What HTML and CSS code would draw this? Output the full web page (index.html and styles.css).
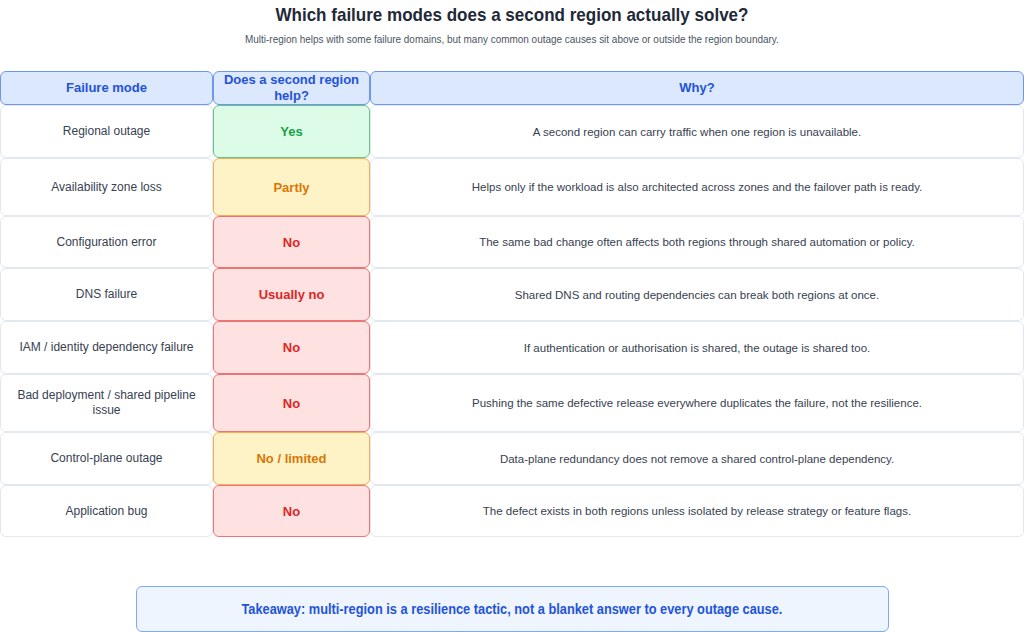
FILE: index.html
```html
<!DOCTYPE html>
<html>
<head>
<meta charset="utf-8">
<link rel="stylesheet" href="styles.css">
</head>
<body>
<div class="page">
  <h1 class="title">Which failure modes does a second region actually solve?</h1>
  <p class="subtitle">Multi-region helps with some failure domains, but many common outage causes sit above or outside the region boundary.</p>
  <div class="table">
    <div class="cell head">Failure mode</div>
    <div class="cell head">Does a second region help?</div>
    <div class="cell head">Why?</div>

    <div class="cell mode">Regional outage</div>
    <div class="cell verdict yes">Yes</div>
    <div class="cell why">A second region can carry traffic when one region is unavailable.</div>

    <div class="cell mode">Availability zone loss</div>
    <div class="cell verdict partly">Partly</div>
    <div class="cell why">Helps only if the workload is also architected across zones and the failover path is ready.</div>

    <div class="cell mode">Configuration error</div>
    <div class="cell verdict no">No</div>
    <div class="cell why">The same bad change often affects both regions through shared automation or policy.</div>

    <div class="cell mode">DNS failure</div>
    <div class="cell verdict no">Usually no</div>
    <div class="cell why">Shared DNS and routing dependencies can break both regions at once.</div>

    <div class="cell mode">IAM / identity dependency failure</div>
    <div class="cell verdict no">No</div>
    <div class="cell why">If authentication or authorisation is shared, the outage is shared too.</div>

    <div class="cell mode">Bad deployment / shared pipeline issue</div>
    <div class="cell verdict no">No</div>
    <div class="cell why">Pushing the same defective release everywhere duplicates the failure, not the resilience.</div>

    <div class="cell mode">Control-plane outage</div>
    <div class="cell verdict partly">No / limited</div>
    <div class="cell why">Data-plane redundancy does not remove a shared control-plane dependency.</div>

    <div class="cell mode">Application bug</div>
    <div class="cell verdict no">No</div>
    <div class="cell why">The defect exists in both regions unless isolated by release strategy or feature flags.</div>
  </div>
  <div class="takeaway"><span class="takeaway-text">Takeaway: multi-region is a resilience tactic, not a blanket answer to every outage cause.</span></div>
</div>
</body>
</html>
```

FILE: styles.css
```css
* { box-sizing: border-box; }
html, body {
  margin: 0;
  padding: 0;
  background: #ffffff;
  font-family: "Liberation Sans", Arial, sans-serif;
}
.page {
  width: 1024px;
  height: 632px;
  display: flex;
  flex-direction: column;
  align-items: center;
  overflow: hidden;
}
.title {
  margin: 4px 0 0;
  font-size: 19px;
  line-height: 22px;
  font-weight: bold;
  color: #1f2937;
  white-space: nowrap;
  transform: scaleX(0.896);
}
.subtitle {
  margin: 7px 0 0;
  font-size: 11px;
  line-height: 13px;
  color: #4b5563;
  white-space: nowrap;
  transform: scaleX(0.905);
}
.table {
  margin-top: 25px;
  width: 1024px;
  display: grid;
  grid-template-columns: 213px 157px 654px;
  grid-template-rows: 34px 53px 58px 52px 53px 53px 58px 53px 52px;
}
.cell {
  display: flex;
  align-items: center;
  justify-content: center;
  text-align: center;
  border: 1px solid #e2e8f0;
  border-radius: 6px;
  background: #ffffff;
  padding: 0 8px;
}
.head {
  background: #dbe8fd;
  border-color: #6d97ea;
  color: #2453d8;
  font-weight: bold;
  font-size: 13px;
  line-height: 16px;
}
.mode {
  font-size: 12px;
  line-height: 15px;
  color: #374151;
  padding: 0 12px;
}
.why {
  font-size: 11.5px;
  line-height: 14px;
  color: #374151;
}
.verdict {
  font-weight: bold;
  font-size: 13px;
}
.yes {
  background: #dcfce7;
  border-color: #6cc08a;
  color: #16a34a;
}
.partly {
  background: #fef3c7;
  border-color: #f0b05c;
  color: #d97706;
}
.no {
  background: #fee2e2;
  border-color: #ec7474;
  color: #dc2626;
}
.takeaway {
  margin-top: 49px;
  width: 753px;
  height: 46px;
  display: flex;
  align-items: center;
  justify-content: center;
  background: #eef5ff;
  border: 1px solid #7eaaf2;
  border-radius: 6px;
  color: #2453d8;
  font-weight: bold;
  font-size: 14px;
}
.takeaway-text {
  white-space: nowrap;
  transform: scaleX(0.914);
}
```
